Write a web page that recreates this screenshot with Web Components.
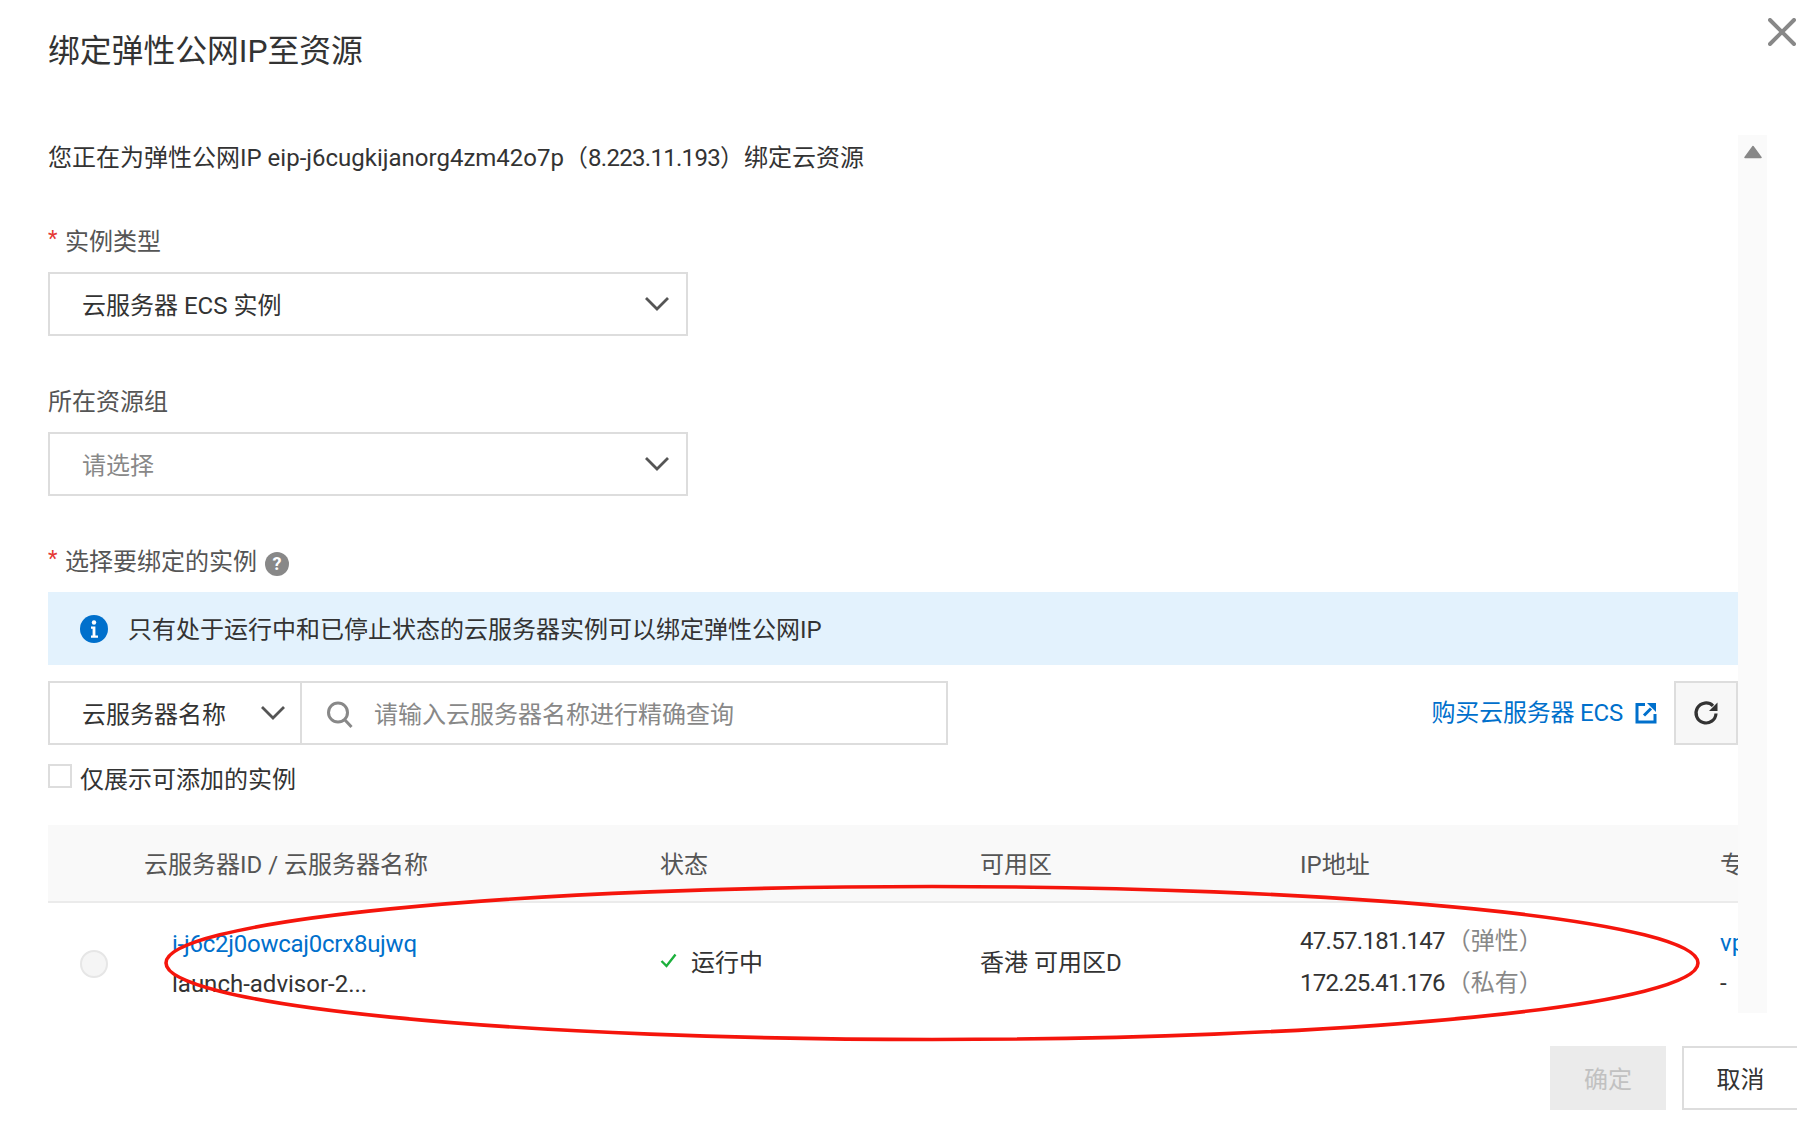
<!DOCTYPE html>
<html lang="zh-CN">
<head>
<meta charset="utf-8">
<title>绑定弹性公网IP至资源</title>
<style>
  html, body { margin: 0; padding: 0; background: #fff; overflow: hidden; }
  body {
    font-family: Roboto, "Noto Sans CJK SC", sans-serif;
    font-size: 24px;
    color: #333;
  }
</style>
</head>
<body>

<bind-dialog heading="绑定弹性公网IP至资源">
  <form-intro>您正在为弹性公网IP eip-j6cugkijanorg4zm42o7p（<span style="letter-spacing:-0.7px">8.223.11.193</span>）绑定云资源</form-intro>
  <form-label required first>实例类型</form-label>
  <select-box>云服务器 ECS 实例</select-box>
  <form-label>所在资源组</form-label>
  <select-box placeholder>请选择</select-box>
  <form-label required help>选择要绑定的实例</form-label>
  <info-alert>只有处于运行中和已停止状态的云服务器实例可以绑定弹性公网IP</info-alert>
  <search-toolbar></search-toolbar>
  <check-row>仅展示可添加的实例</check-row>
  <instance-table></instance-table>
</bind-dialog>

<script>
  const CHEVRON = `<svg width="26" height="15" viewBox="0 0 26 15" fill="none"><path d="M2 2l11 11L24 2" stroke="#555" stroke-width="2.8"/></svg>`;

  // Dialog shell: title, scroll area, footer buttons and the red annotation on top
  class BindDialog extends HTMLElement {
    constructor() {
      super();
      this.attachShadow({ mode: 'open' });
    }

    connectedCallback() {
      this.shadowRoot.innerHTML = `
        <style>
          :host { display: flex; flex-direction: column; position: relative; width: 1797px; height: 1129px; overflow: hidden; }
          .head { height: 135px; padding-left: 48px; flex: none; box-sizing: border-box; }
          h1 { margin: 0; padding-top: 29px; font-size: 31.8px; line-height: 44px; font-weight: 400; color: #333; }
          .close { position: absolute; right: 1px; top: 18px; }
          .scroll { display: flex; height: 878px; margin-left: 48px; flex: none; }
          .content { width: 1690px; overflow: hidden; flex: none; }
          .bar { width: 29px; background: #fafafa; display: flex; justify-content: center; padding-top: 10px; box-sizing: border-box; flex: none; }
          .foot { display: flex; justify-content: flex-end; gap: 16px; padding-top: 33px; }
          button { width: 116px; height: 64px; box-sizing: border-box; font: inherit; padding: 0 0 2px; }
          .ok { background: #ebebeb; color: #c1c1c1; border: none; }
          .cancel { width: 115px; background: #fff; color: #333; border: 2px solid #ddd; border-right: none; }
          .mark { position: absolute; left: 0; top: 0; pointer-events: none; }
        </style>
        <div class="head"><h1>${this.getAttribute('heading')}</h1></div>
        <svg class="close" width="28" height="28" viewBox="0 0 28 28"><path d="M2 2l24 24M26 2L2 26" stroke="#888" stroke-width="4" stroke-linecap="round"/></svg>
        <div class="scroll">
          <div class="content"><slot></slot></div>
          <div class="bar"><svg width="18" height="14" viewBox="0 0 18 14"><path d="M9 1.5L17 12.5H1z" fill="#888" stroke="#888" stroke-width="1.5" stroke-linejoin="round"/></svg></div>
        </div>
        <div class="foot">
          <button class="ok" disabled>确定</button>
          <button class="cancel">取消</button>
        </div>
        <svg class="mark" width="1797" height="1129"><ellipse cx="932" cy="963" rx="766" ry="76.5" fill="none" stroke="#f5150c" stroke-width="3.6"/></svg>
      `;
    }
  }

  class FormIntro extends HTMLElement {
    constructor() {
      super();
      this.attachShadow({ mode: 'open' }).innerHTML = `
        <style>:host { display: block; height: 44px; padding-top: 1px; box-sizing: border-box; line-height: 44px; white-space: nowrap; color: #333; }</style>
        <slot></slot>`;
    }
  }

  class FormLabel extends HTMLElement {
    constructor() {
      super();
      this.attachShadow({ mode: 'open' });
    }

    connectedCallback() {
      const star = this.hasAttribute('required') ? '<span class="star">*</span>' : '';
      const help = this.hasAttribute('help') ? '<span class="help">?</span>' : '';
      this.shadowRoot.innerHTML = `
        <style>
          :host { display: flex; align-items: center; box-sizing: border-box; height: 34px; padding-bottom: 6px; margin: 49px 0 13px; color: #555; white-space: nowrap; }
          :host([first]) { margin-top: 46px; }
          .star { color: #e53935; width: 17px; font-size: 22px; line-height: 34px; }
          .help { width: 24px; height: 24px; border-radius: 50%; background: #888; color: #fff; font-size: 18px; font-weight: 700; line-height: 24px; text-align: center; margin-left: 8px; margin-top: 9px; }
        </style>
        ${star}<slot></slot>${help}`;
    }
  }

  class SelectBox extends HTMLElement {
    constructor() {
      super();
      this.attachShadow({ mode: 'open' }).innerHTML = `
        <style>
          :host { display: flex; align-items: center; justify-content: space-between; box-sizing: border-box; width: 640px; height: 64px; border: 2px solid #ddd; padding: 0 16px 2px 32px; color: #333; }
          :host([placeholder]) { color: #888; }
        </style>
        <slot></slot>${CHEVRON}`;
    }
  }

  class InfoAlert extends HTMLElement {
    constructor() {
      super();
      this.attachShadow({ mode: 'open' }).innerHTML = `
        <style>
          :host { display: flex; align-items: center; gap: 20px; height: 73px; padding-left: 32px; background: #e3f2fd; color: #333; white-space: nowrap; }
          svg { margin-top: 1px; }
          .text { margin-top: -3px; }
        </style>
        <svg width="28" height="28" viewBox="0 0 28 28"><circle cx="14" cy="14" r="14" fill="#0070cc"/><circle cx="14" cy="7.5" r="2.2" fill="#fff"/><path d="M11 11.5h4.4v9H18v2.2h-7v-2.2h1.6v-6.8H11z" fill="#fff"/></svg>
        <div class="text"><slot></slot></div>`;
    }
  }

  class SearchToolbar extends HTMLElement {
    constructor() {
      super();
      this.attachShadow({ mode: 'open' }).innerHTML = `
        <style>
          :host { display: flex; align-items: stretch; height: 64px; margin-top: 16px; white-space: nowrap; }
          .group { display: flex; width: 900px; box-sizing: border-box; border: 2px solid #ddd; }
          .type { display: flex; align-items: center; justify-content: space-between; width: 252px; box-sizing: border-box; padding: 0 14px 2px 32px; border-right: 2px solid #ddd; color: #333; }
          .query { display: flex; align-items: center; gap: 20px; padding: 0 0 2px 24px; color: #888; }
          .query svg { margin-top: 5px; }
          .buy { display: flex; align-items: center; gap: 12px; margin-left: auto; padding: 0 17px 6px 0; color: #0070cc; letter-spacing: -0.2px; }
          .buy svg { margin-top: 6px; }
          .refresh { display: flex; align-items: center; justify-content: center; width: 64px; box-sizing: border-box; border: 2px solid #ddd; background: #f7f7f7; }
        </style>
        <div class="group">
          <div class="type"><span>云服务器名称</span>${CHEVRON}</div>
          <div class="query">
            <svg width="28" height="28" viewBox="0 0 28 28" fill="none"><circle cx="12" cy="11.5" r="9.5" stroke="#888" stroke-width="3"/><path d="M18.5 18.5l7 7.5" stroke="#888" stroke-width="3"/></svg>
            <span>请输入云服务器名称进行精确查询</span>
          </div>
        </div>
        <div class="buy">
          <span>购买云服务器 ECS</span>
          <svg width="22" height="22" viewBox="0 0 22 22" fill="none"><path d="M10 2.5H2V20h18v-8" stroke="#0070cc" stroke-width="3"/><path d="M9 13.5L16 6.5" stroke="#0070cc" stroke-width="3"/><path d="M12 1h9v9z" fill="#0070cc"/></svg>
        </div>
        <div class="refresh">
          <svg width="28" height="28" viewBox="0 0 28 28" fill="none"><path d="M21 6.8A10 10 0 1 0 24 14.5" stroke="#333" stroke-width="3.2"/><path d="M25.5 3.5v8.5H17z" fill="#333"/></svg>
        </div>`;
    }
  }

  class CheckRow extends HTMLElement {
    constructor() {
      super();
      this.attachShadow({ mode: 'open' }).innerHTML = `
        <style>
          :host { display: flex; align-items: center; gap: 8px; height: 34px; margin: 15px 0 31px; color: #333; white-space: nowrap; }
          i { display: block; width: 24px; height: 24px; box-sizing: border-box; border: 2px solid #ddd; background: #fff; margin-top: -3px; }
        </style>
        <i></i><slot></slot>`;
    }
  }

  class InstanceTable extends HTMLElement {
    constructor() {
      super();
      this.attachShadow({ mode: 'open' }).innerHTML = `
        <style>
          :host { display: grid; grid-template-columns: 96px 516px 320px 320px 420px 200px; width: 1872px; white-space: nowrap; color: #333; }
          .th { height: 76px; line-height: 80px; background: #f9f9f9; border-bottom: 2px solid #ebebeb; color: #555; }
          .td { height: 110px; display: flex; flex-direction: column; justify-content: center; box-sizing: border-box; }
          .radio { align-items: flex-start; padding-left: 32px; }
          .radio i { display: block; width: 28px; height: 28px; box-sizing: border-box; border-radius: 50%; border: 2px solid #e6e6e6; background: #f5f5f5; margin-top: 12px; }
          .id { padding: 11px 0 0 28px; gap: 8px; }
          .line { line-height: 32px; display: block; }
          a { color: #0070cc; text-decoration: none; }
          .id a { letter-spacing: -0.25px; }
          .state { flex-direction: row; align-items: center; justify-content: flex-start; gap: 14px; padding-top: 5px; }
          .zone { padding-top: 5px; }
          .ip { padding-top: 8px; gap: 10px; }
          .num { letter-spacing: -0.7px; }
          .ip span.note { color: #888; margin-left: -4px; }
          .vpc { gap: 8px; padding-top: 10px; }
        </style>
        <div class="th"></div>
        <div class="th">云服务器ID / 云服务器名称</div>
        <div class="th">状态</div>
        <div class="th">可用区</div>
        <div class="th">IP地址</div>
        <div class="th">专</div>
        <div class="td radio"><i></i></div>
        <div class="td id">
          <a class="line">i-j6c2j0owcaj0crx8ujwq</a>
          <div class="line">launch-advisor-2...</div>
        </div>
        <div class="td state">
          <svg width="17" height="15" viewBox="0 0 17 15" fill="none"><path d="M1.5 8l5 5L15.5 1.5" stroke="#1cb03c" stroke-width="2.4"/></svg>
          <div>运行中</div>
        </div>
        <div class="td zone">香港 可用区D</div>
        <div class="td ip">
          <div class="line"><span class="num">47.57.181.147</span> <span class="note">（弹性）</span></div>
          <div class="line"><span class="num">172.25.41.176</span> <span class="note">（私有）</span></div>
        </div>
        <div class="td vpc">
          <a class="line">vp</a>
          <div class="line">-</div>
        </div>`;
    }
  }

  customElements.define('bind-dialog', BindDialog);
  customElements.define('form-intro', FormIntro);
  customElements.define('form-label', FormLabel);
  customElements.define('select-box', SelectBox);
  customElements.define('info-alert', InfoAlert);
  customElements.define('search-toolbar', SearchToolbar);
  customElements.define('check-row', CheckRow);
  customElements.define('instance-table', InstanceTable);
</script>
</body>
</html>
